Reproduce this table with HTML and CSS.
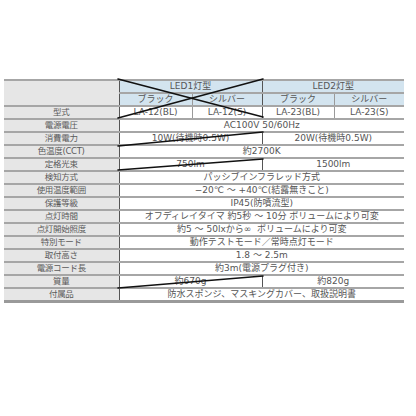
FILE: index.html
```html
<!DOCTYPE html>
<html lang="ja">
<head>
<meta charset="utf-8">
<link rel="stylesheet" href="styles.css">
</head>
<body>
<div class="sheet">
  <table class="spec">
    <colgroup>
      <col class="c-label"><col class="c1"><col class="c2"><col class="c3"><col class="c4">
    </colgroup>
    <tr class="head">
      <td class="label" rowspan="2"></td>
      <td colspan="2" class="blue vsep">LED1灯型</td>
      <td colspan="2" class="blue vsep">LED2灯型</td>
    </tr>
    <tr class="head">
      <td class="blue vsep">ブラック</td><td class="blue">シルバー</td>
      <td class="blue vsep">ブラック</td><td class="blue">シルバー</td>
    </tr>
    <tr><td class="label">型式</td><td class="vsep">LA-12(BL)</td><td>LA-12(S)</td><td class="vsep">LA-23(BL)</td><td>LA-23(S)</td></tr>
    <tr><td class="label">電源電圧</td><td colspan="4" class="vsep">AC100V 50/60Hz</td></tr>
    <tr><td class="label">消費電力</td><td colspan="2" class="vsep">10W(待機時0.5W)</td><td colspan="2" class="vsep">20W(待機時0.5W)</td></tr>
    <tr><td class="label">色温度(CCT)</td><td colspan="4" class="vsep">約2700K</td></tr>
    <tr><td class="label">定格光束</td><td colspan="2" class="vsep">750lm</td><td colspan="2" class="vsep">1500lm</td></tr>
    <tr><td class="label">検知方式</td><td colspan="4" class="vsep">パッシブインフラレッド方式</td></tr>
    <tr><td class="label">使用温度範囲</td><td colspan="4" class="vsep">−20℃ 〜 +40℃(結露無きこと)</td></tr>
    <tr><td class="label">保護等級</td><td colspan="4" class="vsep">IP45(防噴流型)</td></tr>
    <tr><td class="label">点灯時間</td><td colspan="4" class="vsep">オフディレイタイマ 約5秒 〜 10分 ボリュームにより可変</td></tr>
    <tr><td class="label">点灯開始照度</td><td colspan="4" class="vsep">約5 〜 50lxから∞&nbsp;&nbsp;ボリュームにより可変</td></tr>
    <tr><td class="label">特別モード</td><td colspan="4" class="vsep">動作テストモード／常時点灯モード</td></tr>
    <tr><td class="label">取付高さ</td><td colspan="4" class="vsep">1.8 〜 2.5m</td></tr>
    <tr><td class="label">電源コード長</td><td colspan="4" class="vsep">約3m(電源プラグ付き)</td></tr>
    <tr><td class="label">質量</td><td colspan="2" class="vsep">約670g</td><td colspan="2" class="vsep">約820g</td></tr>
    <tr class="last"><td class="label">付属品</td><td colspan="4" class="vsep">防水スポンジ、マスキングカバー、取扱説明書</td></tr>
  </table>
  <svg class="strikes" width="416" height="416" viewBox="0 0 416 416">
    <g stroke="#111" stroke-width="1.6" stroke-linecap="round">
      <line x1="118" y1="79" x2="263" y2="117"/>
      <line x1="118" y1="118" x2="263" y2="79"/>
      <line x1="118" y1="146" x2="263" y2="132"/>
      <line x1="118" y1="170" x2="263" y2="159"/>
      <line x1="118" y1="288" x2="263" y2="276"/>
    </g>
  </svg>
</div>
</body>
</html>
```

FILE: styles.css
```css
html, body {
  margin: 0;
  padding: 0;
  background: #ffffff;
}

.sheet {
  position: relative;
  width: 416px;
  height: 416px;
  overflow: hidden;
}

.spec {
  margin: 79px 0 0 4px;
  width: 400px;
  table-layout: fixed;
  border-collapse: collapse;
  font-family: "DejaVu Sans", "Noto Sans CJK JP", sans-serif;
  font-size: 9px;
  color: #555555;
}

.c-label { width: 115px; }
.c1 { width: 73px; }
.c2 { width: 70px; }
.c3 { width: 72px; }
.c4 { width: 70px; }

.spec td {
  height: 11px;
  padding: 0;
  text-align: center;
  vertical-align: middle;
  white-space: nowrap;
  overflow: hidden;
  line-height: 11px;
  border-top: 2px solid #a6a6a6;
  border-bottom: 2px solid #a6a6a6;
  border-left: 1px solid #9a9a9a;
}

.spec td.label {
  background: #e6e6e6;
  border-left: none;
  font-size: 8.5px;
  letter-spacing: -0.3px;
  color: #5a5a5a;
}

.spec td.vsep {
  border-left: 1px solid #555555;
}

.spec td.blue {
  background: #d3e4ef;
}

.spec tr.last td {
  border-bottom: 3px solid #9a9a9a;
}

.strikes {
  position: absolute;
  left: 0;
  top: 0;
  pointer-events: none;
}
```
